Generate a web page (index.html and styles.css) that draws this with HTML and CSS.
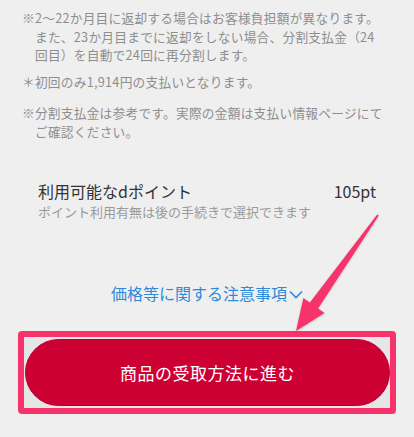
FILE: index.html
```html
<!DOCTYPE html>
<html lang="ja">
<head>
<meta charset="utf-8">
<link rel="stylesheet" href="styles.css">
</head>
<body>
<div class="page">
  <section class="notes">
    <p class="note">※2〜22か月目に返却する場合はお客様負担額が異なります。<br>また、23か月目までに返却をしない場合、分割支払金（24<br>回目）を自動で24回に再分割します。</p>
    <p class="note note-first">＊初回のみ1,914円の支払いとなります。</p>
    <p class="note note-ref">※分割支払金は参考です。実際の金額は支払い情報ページにて<br>ご確認ください。</p>
  </section>

  <section class="points">
    <div class="points-row">
      <span class="points-label">利用可能なdポイント</span>
      <span class="points-value">105pt</span>
    </div>
    <p class="points-sub">ポイント利用有無は後の手続きで選択できます</p>
  </section>

  <div class="link-wrap">
    <a class="price-link">価格等に関する注意事項<svg class="chev" width="14" height="9" viewBox="0 0 14 9"><polyline points="1,1.5 7,7.5 13,1.5" fill="none" stroke="#2f8ad8" stroke-width="1.6"/></svg></a>
  </div>

  <div class="highlight">
    <button class="cta">商品の受取方法に進む</button>
  </div>

  <svg class="arrow" width="414" height="437" viewBox="0 0 414 437">
    <polygon points="377.2,214.4 378.8,215.6 318.1,308.4 324.6,313 296,331 303.4,298 309.9,302.6" fill="#f6336a"/>
  </svg>
</div>
</body>
</html>
```

FILE: styles.css
```css
html, body {
  margin: 0;
  padding: 0;
  background: #efefef;
}
body {
  font-family: "Noto Sans CJK JP", "Noto Sans", sans-serif;
  width: 414px;
  height: 437px;
  overflow: hidden;
}
.page {
  position: relative;
  height: 437px;
}
.notes {
  padding: 9px 22px 0 22px;
}
.note {
  margin: 0;
  font-size: 12.7px;
  letter-spacing: 0.25px;
  line-height: 18.5px;
  color: #8e8e8e;
  padding-left: 13px;
  text-indent: -13px;
  white-space: nowrap;
}
.note-first {
  margin-top: 8px;
}
.note-ref {
  margin-top: 13px;
}
.points {
  padding: 0 38px;
  margin-top: 40px;
}
.points-row {
  display: flex;
  justify-content: space-between;
  align-items: baseline;
  font-size: 16px;
  line-height: 20px;
  color: #333333;
}
.points-value {
  font-size: 16px;
}
.points-sub {
  margin: 2px 0 0 0;
  font-size: 13px;
  line-height: 18px;
  color: #9a9a9a;
}
.link-wrap {
  margin-top: 60px;
  text-align: center;
}
.price-link {
  font-size: 16px;
  line-height: 22px;
  color: #2f8ad8;
  display: inline-flex;
  align-items: center;
  gap: 2px;
}
.chev {
  margin-top: 2px;
}
.highlight {
  margin: 26px 18px 0 18px;
  border: 6px solid #f6336a;
  border-radius: 4px;
  padding: 2px 0 2px 1px;
  background: #e6e6e6;
  display: flex;
}
.cta {
  flex: 1;
  height: 67px;
  border: 1px solid #b8002c;
  border-radius: 34px;
  background: #cc0033;
  color: #ffffff;
  font-family: "Noto Sans CJK JP", "Noto Sans", sans-serif;
  font-size: 17px;
  letter-spacing: 0.5px;
  padding: 0;
}
.arrow {
  position: absolute;
  left: 0;
  top: 0;
  pointer-events: none;
  filter: drop-shadow(0 1px 1px rgba(0, 0, 0, 0.18));
}
```
